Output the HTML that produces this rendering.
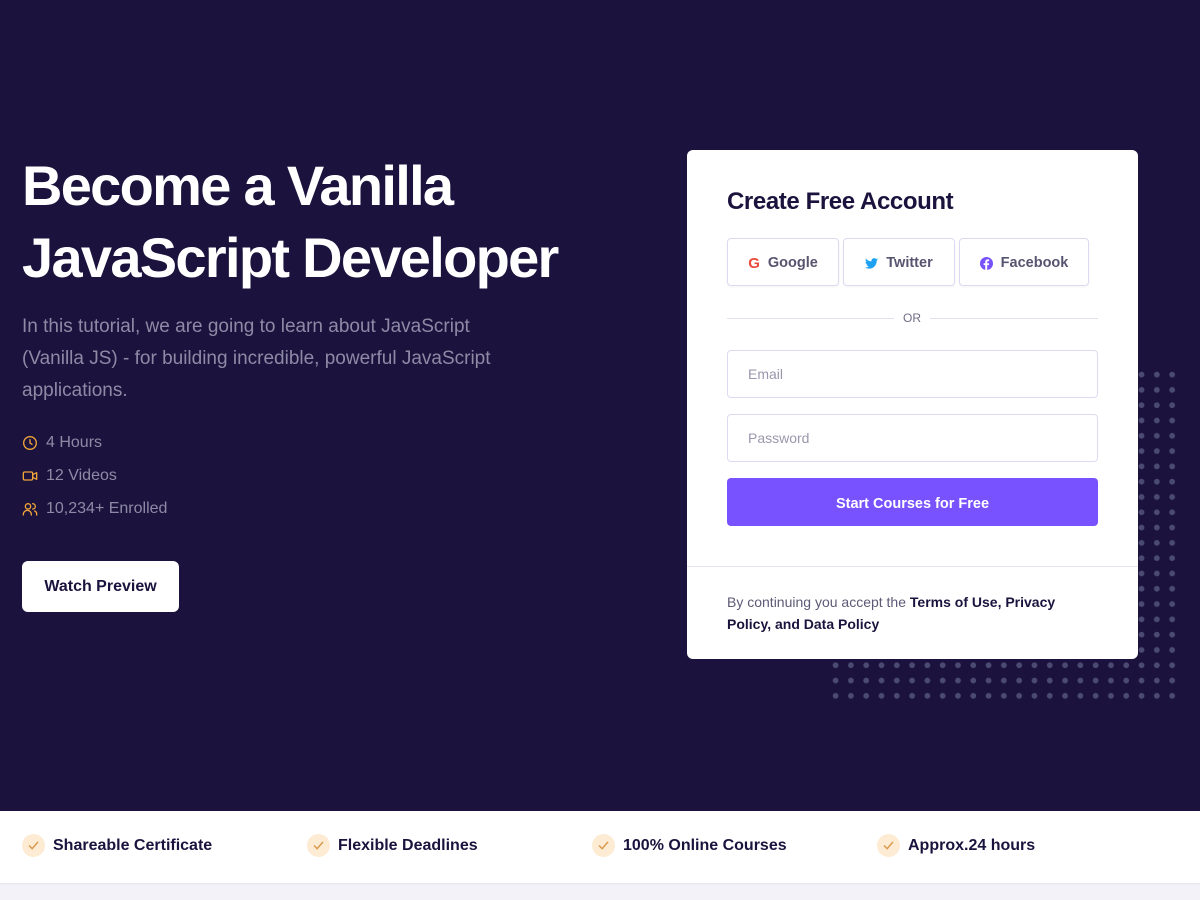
<!DOCTYPE html>
<html><head><meta charset="utf-8"><style>
*{box-sizing:border-box;margin:0;padding:0}
body{width:1200px;height:900px;overflow:hidden;background:#f3f2f8;font-family:"Liberation Sans",sans-serif;position:relative}
.hero{position:absolute;left:0;top:0;width:1200px;height:811px;background:#1b133d}
h1{position:absolute;left:22px;top:150px;color:#fff;font-size:56px;line-height:72px;font-weight:700;letter-spacing:-1.7px}
.desc{position:absolute;left:22px;top:311px;width:505px;color:#8e8aa6;font-size:19px;line-height:32px}
.meta{position:absolute;left:22px;color:#8e8aa6;font-size:16px;display:flex;align-items:center;gap:8px}
.meta svg{width:16px;height:16px}
.wp{position:absolute;left:22px;top:561px;width:157px;height:51px;background:#fff;border-radius:6px;color:#1b133d;font-weight:700;font-size:16px;display:flex;align-items:center;justify-content:center}
.dots{position:absolute;left:828px;top:367px;width:354px;height:338px;background-image:radial-gradient(circle at 7.6px 7.6px,#4b4a72 2.6px,transparent 3.1px);background-size:15.3px 15.3px}
.card{position:absolute;left:687px;top:150px;width:451px;height:509px;background:#fff;border-radius:6px}
.card h2{position:absolute;left:40px;top:38px;font-size:24px;color:#1b133d;font-weight:700;letter-spacing:-0.4px}
.sb{position:absolute;top:88px;height:48px;padding-top:2px;border:1px solid #dcdaf0;border-radius:4px;display:flex;align-items:center;justify-content:center;gap:8px;font-size:14.5px;font-weight:700;color:#57546f;box-shadow:0 1px 2px rgba(0,0,0,.05)}
.or{position:absolute;left:40px;top:161px;width:371px;height:14px}
.or:before{content:"";position:absolute;left:0;right:0;top:7px;border-top:1px solid #e3e1f0}
.or span{position:absolute;left:167px;top:0;background:#fff;padding:0 9px;font-size:12px;color:#6f6c85}
.in{position:absolute;left:40px;width:371px;height:48px;border:1px solid #dcdaf0;border-radius:4px;padding-left:20px;display:flex;align-items:center;font-size:14px;color:#9a97ad}
.btn{position:absolute;left:40px;top:328px;width:371px;height:48px;padding-top:3px;background:#7752fe;border-radius:4px;color:#fff;font-weight:700;font-size:14.5px;display:flex;align-items:center;justify-content:center}
.sep{position:absolute;left:0;right:0;top:416px;border-top:1px solid #e7e5f2}
.terms{position:absolute;left:40px;top:441px;width:350px;font-size:14px;line-height:22px;color:#5d5a75}
.terms b{color:#1b133d}
.strip{position:absolute;left:0;top:811px;width:1200px;height:72px;background:#fff;box-shadow:0 1px 2px rgba(0,0,0,.06)}
.f{position:absolute;top:23px;display:flex;align-items:center;gap:8px;font-size:16px;font-weight:700;color:#1b133d}
.ck{width:23px;height:23px;border-radius:50%;background:#fdebd3;display:flex;align-items:center;justify-content:center}
</style></head><body>
<div class="hero">
<h1>Become a Vanilla<br>JavaScript Developer</h1>
<div class="desc">In this tutorial, we are going to learn about JavaScript (Vanilla JS) - for building incredible, powerful JavaScript applications.</div>
<div class="meta" style="top:434px"><svg viewBox="0 0 24 24" fill="none" stroke="#f0a43a" stroke-width="2" stroke-linecap="round"><circle cx="12" cy="12" r="9.5"/><path d="M12 7v5l3 2"/></svg>4 Hours</div>
<div class="meta" style="top:467px"><svg viewBox="0 0 24 24" fill="none" stroke="#f0a43a" stroke-width="2" stroke-linejoin="round"><rect x="2" y="6" width="14" height="12" rx="2"/><path d="M16 10l6-3v10l-6-3z"/></svg>12 Videos</div>
<div class="meta" style="top:500px"><svg viewBox="0 0 24 24" fill="none" stroke="#f0a43a" stroke-width="2" stroke-linecap="round"><circle cx="9" cy="8" r="4"/><path d="M2 21v-1a6 6 0 0 1 12 0v1M16 4a4 4 0 0 1 0 8M19 15a5 5 0 0 1 3 5v1"/></svg>10,234+ Enrolled</div>
<div class="wp">Watch Preview</div>
<div class="dots"></div>
<div class="card">
<h2>Create Free Account</h2>
<div class="sb" style="left:40px;width:112px"><span style="color:#e94b3c;font-size:15px">G</span>Google</div>
<div class="sb" style="left:156px;width:112px"><svg width="13" height="11" viewBox="0 0 24 20"><path fill="#1da1f2" d="M24 2.4a10 10 0 0 1-2.8.8A5 5 0 0 0 23.3.4a10 10 0 0 1-3.1 1.2A5 5 0 0 0 11.8 6 14 14 0 0 1 1.7.9a5 5 0 0 0 1.5 6.6A5 5 0 0 1 1 6.9a5 5 0 0 0 3.9 4.9 5 5 0 0 1-2.2.1 5 5 0 0 0 4.6 3.4A10 10 0 0 1 0 17.3 14 14 0 0 0 7.5 19.5c9 0 14-7.5 14-14v-.6A10 10 0 0 0 24 2.4z"/></svg>Twitter</div>
<div class="sb" style="left:272px;width:130px"><svg width="13" height="13" viewBox="0 0 24 24"><circle cx="12" cy="12" r="12" fill="#7752fe"/><path fill="#fff" d="M13.3 24v-9h3l.5-3.5h-3.5V9.3c0-1 .3-1.7 1.8-1.7h1.8V4.5c-.3 0-1.4-.1-2.7-.1-2.7 0-4.5 1.6-4.5 4.6v2.5h-3V15h3v9z"/></svg>Facebook</div>
<div class="or"><span>OR</span></div>
<div class="in" style="top:200px">Email</div>
<div class="in" style="top:264px">Password</div>
<div class="btn">Start Courses for Free</div>
<div class="sep"></div>
<div class="terms">By continuing you accept the <b>Terms of Use, Privacy Policy, and Data Policy</b></div>
</div>
</div>
<div class="strip">
<div class="f" style="left:22px"><span class="ck"><svg width="11" height="9" viewBox="0 0 12 10" fill="none" stroke="#d99a4e" stroke-width="1.6"><path d="M1 5l3.5 3.5L11 1"/></svg></span>Shareable Certificate</div>
<div class="f" style="left:307px"><span class="ck"><svg width="11" height="9" viewBox="0 0 12 10" fill="none" stroke="#d99a4e" stroke-width="1.6"><path d="M1 5l3.5 3.5L11 1"/></svg></span>Flexible Deadlines</div>
<div class="f" style="left:592px"><span class="ck"><svg width="11" height="9" viewBox="0 0 12 10" fill="none" stroke="#d99a4e" stroke-width="1.6"><path d="M1 5l3.5 3.5L11 1"/></svg></span>100% Online Courses</div>
<div class="f" style="left:877px"><span class="ck"><svg width="11" height="9" viewBox="0 0 12 10" fill="none" stroke="#d99a4e" stroke-width="1.6"><path d="M1 5l3.5 3.5L11 1"/></svg></span>Approx.24 hours</div>
</div>
</body></html>
